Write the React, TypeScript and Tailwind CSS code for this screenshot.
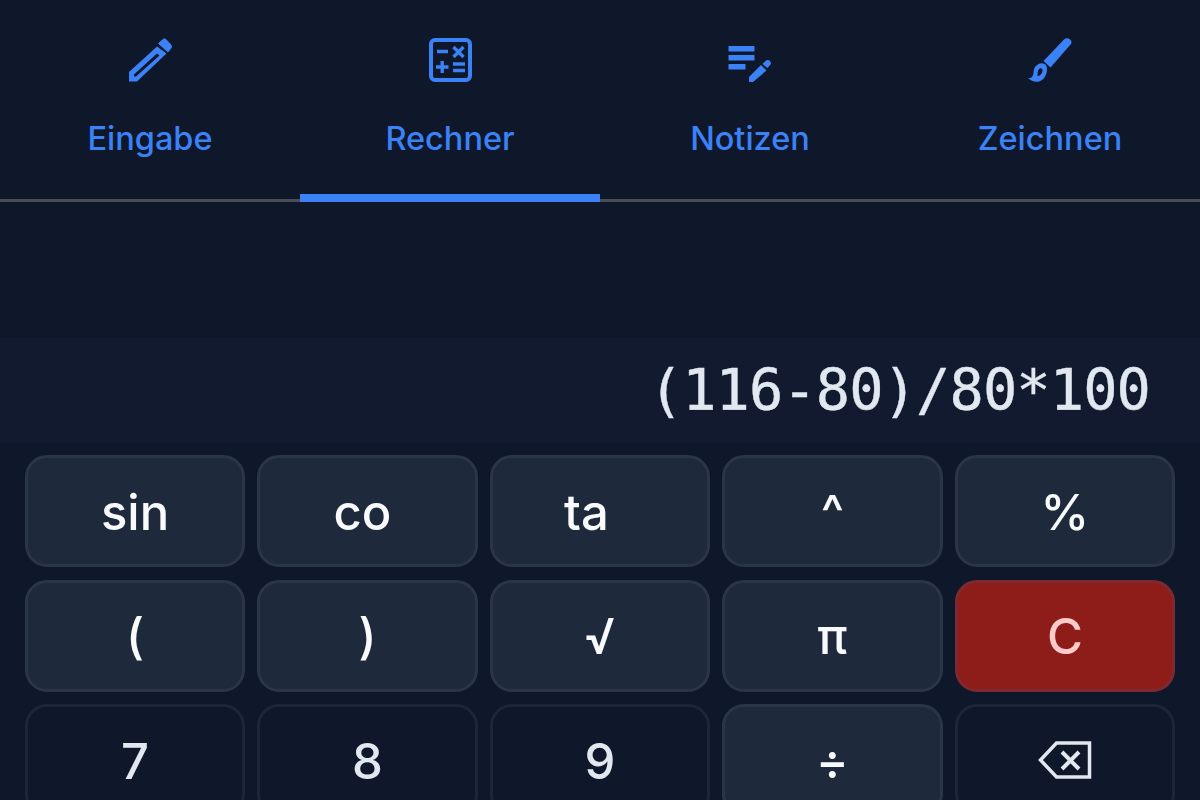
const tabs = [
  { label: 'Eingabe', icon: <PencilIcon /> },
  { label: 'Rechner', icon: <CalcIcon />, active: true },
  { label: 'Notizen', icon: <NotesIcon /> },
  { label: 'Zeichnen', icon: <BrushIcon /> },
]

const keys = [
  { label: 'sin', kind: 'fn' },
  { label: 'co', kind: 'fn', text: 'mr-[10px]' },
  { label: 'ta', kind: 'fn', text: 'mr-[27px]' },
  { label: '^', kind: 'fn' },
  { label: '%', kind: 'fn' },
  { label: '(', kind: 'fn' },
  { label: ')', kind: 'fn' },
  { label: '√', kind: 'fn' },
  { label: 'π', kind: 'fn' },
  { label: 'C', kind: 'clear' },
  { label: '7', kind: 'num' },
  { label: '8', kind: 'num' },
  { label: '9', kind: 'num' },
  { label: '÷', kind: 'fn' },
  { label: 'back', kind: 'num' },
]

function PencilIcon() {
  return (
    <svg width="44" height="44" viewBox="0 0 44 44" fill="#3b82f6">
      <path d="M35 1.5 Q36.5 0 38 1.5 L43 7 Q44 8.5 43 10 L40 14 L30.5 5.5 Z" stroke="#3b82f6" strokeWidth="1" strokeLinejoin="round" />
      <path
        fillRule="evenodd"
        d="M29 8.5 L38.5 15.5 L9 43.5 L1 43.5 L1 34 Z M29 15.5 L31.5 17.5 L8 38.5 L6 38.5 L6 36.5 Z"
      />
    </svg>
  )
}

function CalcIcon() {
  return (
    <svg width="44" height="44" viewBox="0 0 44 44" fill="none" stroke="#3b82f6">
      <rect x="3" y="2" width="39" height="40" rx="4" strokeWidth="4" />
      <path d="M9 13.5 H20 M25.5 9 L35.5 19 M35.5 9 L25.5 19 M8 29 H20.5 M14.2 23 V35 M25 26 H37 M25 32.5 H37" strokeWidth="3.4" />
    </svg>
  )
}

function NotesIcon() {
  return (
    <svg width="44" height="44" viewBox="0 0 44 44" fill="#3b82f6">
      <rect x="0.5" y="8" width="26" height="5.5" rx="0.5" />
      <rect x="0.5" y="17" width="26" height="5.5" rx="0.5" />
      <rect x="0.5" y="26" width="17" height="5.5" rx="0.5" />
      <path d="M33 27 L38.5 32.5 L25 44 L21 44 L21 39 Z" />
      <path d="M37.5 23 Q39.5 21.5 41.5 22.5 Q43.5 24.5 42.5 26.5 L39.5 30 L34.5 26 Z" />
    </svg>
  )
}

function BrushIcon() {
  return (
    <svg width="44" height="44" viewBox="0 0 44 44" fill="#3b82f6">
      <path d="M36 1.5 Q38.5 -0.5 41.5 1 Q44.5 3 43 6 L22.5 29.5 L15.5 23 Z" />
      <path
        fillRule="evenodd"
        d="M8 28 C12 24 17 25 18.5 28 C20 33 18 41 11 43.5 C7 44.5 3 43 0 40 C4 40.5 5 38 5.5 35 C5.5 32 6 30 8 28 Z M11 31 C9.5 33 9.5 36 9.5 38 C12 38 14.5 35.5 14.5 32 C14 30 12.5 29.5 11 31 Z"
      />
    </svg>
  )
}

function BackspaceIcon() {
  return (
    <svg width="54" height="38" viewBox="0 0 54 38" fill="none" stroke="#e2e8f0" strokeWidth="3.5">
      <path d="M51.5 2 H18.5 L2.5 19 L18.5 36 H51.5 Z" />
      <path d="M24 11 L41 28 M41 11 L24 28" strokeWidth="4" />
    </svg>
  )
}

function Key({ label, text, kind }: { label: string; text?: string; kind: string }) {
  const tone =
    kind === 'clear'
      ? 'bg-[#8e1d19] border-[#7c2a30] text-[#fecaca]'
      : kind === 'fn'
        ? 'bg-[#1e293b] border-[#2a3548] text-[#f8fafc]'
        : 'bg-[#0f172a] border-[#1c2639] text-[#e2e8f0]'
  return (
    <div className={`h-[112px] flex items-center justify-center rounded-[22px] border-[3px] text-[49px] font-medium ${tone}`}>
      {label === 'back' ? <BackspaceIcon /> : <span className={`mt-[3px] ${text ?? ''}`}>{label}</span>}
    </div>
  )
}

export default function App() {
  return (
    <div className="h-[800px] w-[1200px] overflow-hidden bg-[#0f172a] font-['Inter',sans-serif]">
      <div className="grid grid-cols-4 h-[202px] border-b-[3px] border-[#4a4e57]">
        {tabs.map(({ label, icon, active }) => (
          <div key={label} className="relative flex flex-col items-center pt-[38px]">
            {icon}
            <span className="mt-[37px] text-[32.5px] font-medium leading-[40px] text-[#3b82f6]">{label}</span>
            {active && <div className="absolute left-0 right-0 bottom-[-3px] h-[8px] bg-[#3b82f6]" />}
          </div>
        ))}
      </div>

      <div className="mt-[136px] h-[105px] bg-[#111a2e] flex items-center justify-end pr-[50px]">
        <span className="font-['DejaVu_Sans_Mono',monospace] text-[57px] tracking-[-0.9px] [-webkit-text-stroke:0.4px_#e2e8f0] text-[#e2e8f0]">(116-80)/80*100</span>
      </div>

      <div className="grid grid-cols-5 gap-x-[12.25px] gap-y-[12.5px] px-[25px] pt-[12px]">
        {keys.map(k => (
          <Key key={k.label} label={k.label} text={k.text} kind={k.kind} />
        ))}
      </div>
    </div>
  )
}
